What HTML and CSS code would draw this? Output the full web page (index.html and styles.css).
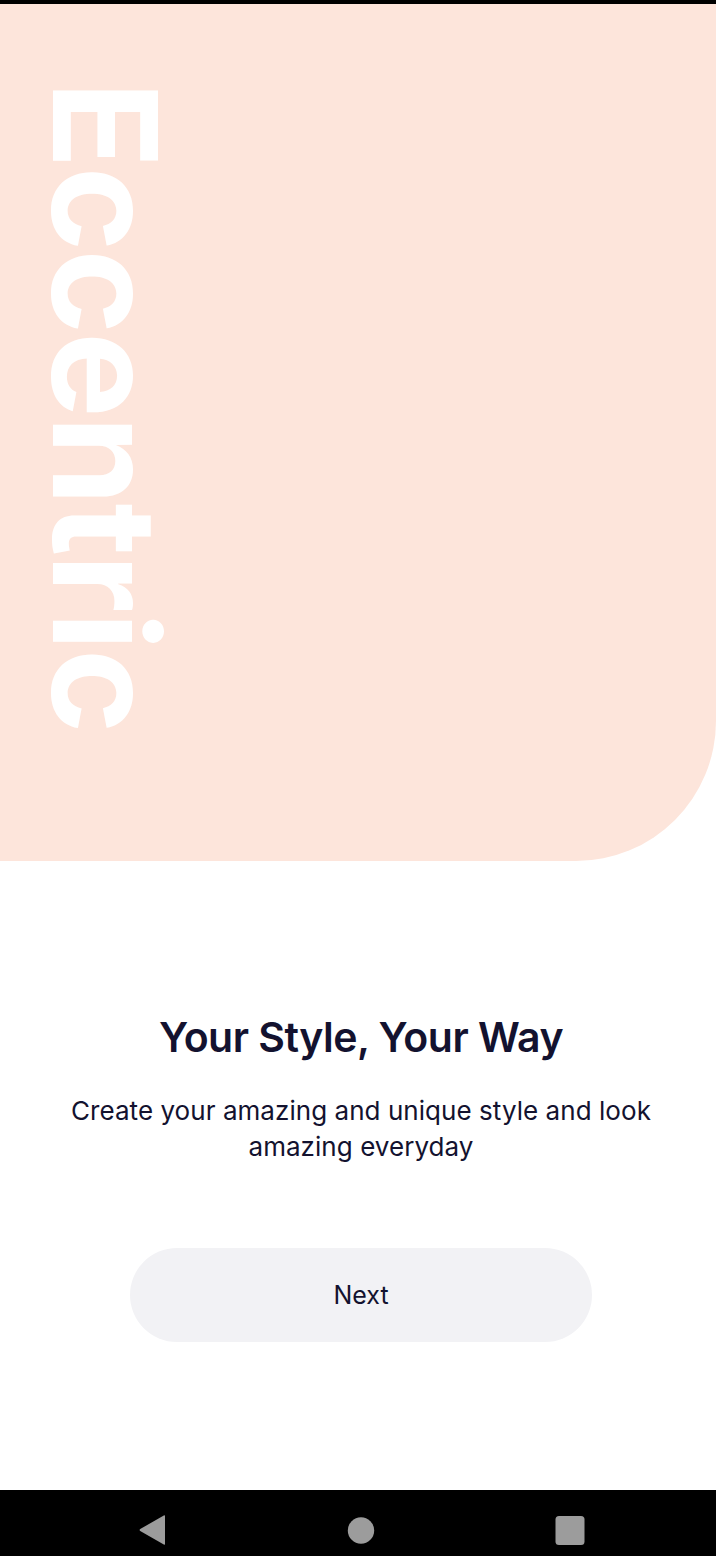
FILE: index.html
```html
<!DOCTYPE html>
<html lang="en">
<head>
<meta charset="utf-8">
<title>Eccentric</title>
<link rel="stylesheet" href="styles.css">
</head>
<body>
<div class="screen">
  <div class="statusbar"></div>
  <header class="hero">
    <h1 class="brand">Eccentric</h1>
  </header>
  <main class="content">
    <h2 class="title">Your Style, Your Way</h2>
    <p class="subtitle">Create your amazing and unique style and look amazing everyday</p>
    <button class="next-btn" type="button">Next</button>
  </main>
  <nav class="navbar">
    <svg class="nav-icon" width="30" height="30" viewBox="0 0 30 30"><path d="M28 1.2 L28 28.8 Q28 30.2 26.8 29.4 L3.2 16 Q2 15 3.2 14 L26.8 0.6 Q28 -0.2 28 1.2 Z" fill="#9c9c9c"/></svg>
    <svg class="nav-icon" width="30" height="30" viewBox="0 0 30 30"><circle cx="15" cy="15.5" r="13.2" fill="#9c9c9c"/></svg>
    <svg class="nav-icon" width="30" height="30" viewBox="0 0 30 30"><rect x="0.5" y="1" width="29" height="29" rx="3.5" fill="#9c9c9c"/></svg>
  </nav>
</div>
</body>
</html>
```
FILE: styles.css
```css
* { box-sizing: border-box; }
html, body { margin: 0; padding: 0; background: #ffffff; }
body { font-family: Inter, "Noto Sans", sans-serif; }

.screen {
  width: 716px;
  height: 1556px;
  display: flex;
  flex-direction: column;
  overflow: hidden;
}

.statusbar {
  height: 4px;
  background: #000;
  flex: none;
}

.hero {
  flex: none;
  height: 857px;
  background: #fde5db;
  border-bottom-right-radius: 140px;
  display: flex;
  align-items: flex-start;
  padding: 77px 0 0 33px;
}

.brand {
  margin: 0;
  writing-mode: vertical-rl;
  font-family: Inter, sans-serif;
  font-weight: 700;
  font-size: 144px;
  line-height: 1;
  color: #ffffff;
  letter-spacing: -2px;
}

.content {
  flex: 1;
  display: flex;
  flex-direction: column;
  align-items: center;
  padding: 150px 0 0 6px;
}

.title {
  margin: 0;
  font-family: Inter, sans-serif;
  font-weight: 600;
  font-size: 41px;
  line-height: 52px;
  color: #13122f;
  letter-spacing: -0.5px;
}

.subtitle {
  margin: 30px 0 0;
  width: 620px;
  text-align: center;
  font-family: Inter, sans-serif;
  font-weight: 400;
  font-size: 26px;
  line-height: 36px;
  color: #13122f;
  letter-spacing: 0.05px;
}

.next-btn {
  margin-top: 83px;
  width: 462px;
  height: 94px;
  border: none;
  border-radius: 47px;
  background: #f2f2f5;
  font-family: Inter, sans-serif;
  font-size: 25px;
  font-weight: 400;
  color: #13122f;
}

.navbar {
  flex: none;
  height: 66px;
  background: #000;
  display: grid;
  grid-template-columns: repeat(3, 209px);
  justify-content: center;
  justify-items: center;
  align-items: start;
  padding: 25px 0 0 5px;
}

.nav-icon { display: block; }
```
